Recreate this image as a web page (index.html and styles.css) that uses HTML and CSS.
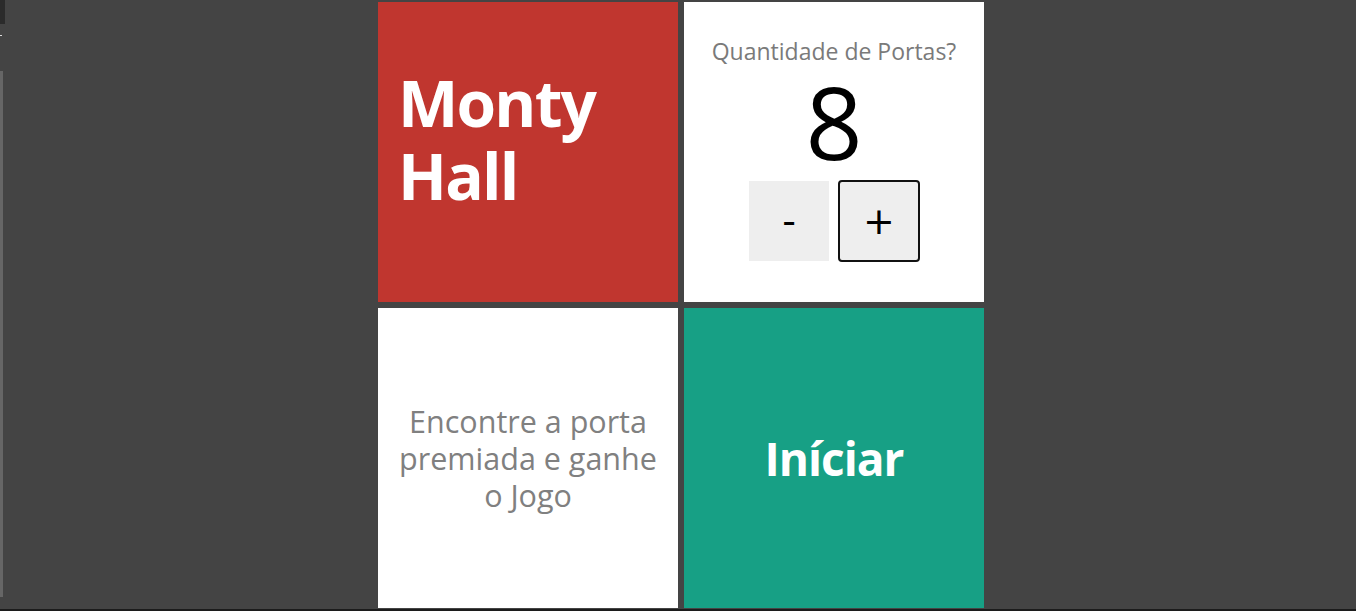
FILE: index.html
```html
<!DOCTYPE html>
<html lang="pt-BR">
<head>
<meta charset="utf-8">
<title>Monty Hall</title>
<link rel="stylesheet" href="styles.css">
</head>
<body>
<div class="edge-top"></div>
<div class="edge-tick"></div>
<div class="edge-strip"></div>
<main class="board">
  <section class="card card-title">
    <h1 class="title">Monty<br>Hall</h1>
  </section>
  <section class="card card-doors">
    <p class="doors-label">Quantidade de Portas?</p>
    <div class="doors-value">8</div>
    <div class="doors-buttons">
      <button class="btn">-</button>
      <button class="btn btn-focus">+</button>
    </div>
  </section>
  <section class="card card-info">
    <p class="info">Encontre a porta premiada e ganhe o Jogo</p>
  </section>
  <section class="card card-start">
    <span class="start">Iníciar</span>
  </section>
</main>
<div class="edge-bottom"></div>
</body>
</html>
```

FILE: styles.css
```css
html, body {
  margin: 0;
  padding: 0;
  height: 100%;
}
body {
  background: #444444;
  font-family: "Open Sans", "Noto Sans", sans-serif;
  overflow: hidden;
}
.board {
  display: grid;
  grid-template-columns: 300px 300px;
  grid-template-rows: 300px 300px;
  gap: 6px;
  justify-content: center;
  padding: 2px 0 0 6px;
}
.card {
  display: flex;
  flex-direction: column;
  box-sizing: border-box;
}
.card-title {
  background: #c0362f;
  justify-content: center;
  padding-left: 20px;
}
.title {
  margin: 0 0 27px 0;
  color: #ffffff;
  font-size: 64px;
  line-height: 73px;
  font-weight: 700;
  letter-spacing: -1.8px;
}
.card-doors {
  background: #ffffff;
  align-items: center;
  padding-top: 34px;
}
.doors-label {
  margin: 0;
  color: #7a7a7a;
  font-size: 23px;
  line-height: 30px;
}
.doors-value {
  margin-top: 0;
  color: #000000;
  font-size: 100px;
  line-height: 110px;
}
.doors-buttons {
  display: flex;
  gap: 10px;
  margin-top: 5px;
}
.btn {
  width: 80px;
  height: 80px;
  border: none;
  background: #eeeeee;
  color: #000000;
  font-family: "DejaVu Sans", sans-serif;
  font-size: 38px;
  padding: 0;
  border-radius: 0;
}
.btn-focus {
  outline: 2px solid #111111;
  outline-offset: -1px;
  border-radius: 3px;
}
.card-info {
  background: #ffffff;
  justify-content: center;
  align-items: center;
  padding: 0 18px;
}
.info {
  margin: 0;
  color: #808080;
  font-size: 30.5px;
  line-height: 37px;
  text-align: center;
}
.card-start {
  background: #17a085;
  justify-content: center;
  align-items: center;
}
.start {
  color: #ffffff;
  font-size: 46px;
  font-weight: 700;
  letter-spacing: -1px;
}
.edge-top {
  position: fixed;
  left: 0;
  top: 0;
  width: 5px;
  height: 24px;
  background: #2b2b2b;
}
.edge-tick {
  position: fixed;
  left: 0;
  top: 35px;
  width: 2px;
  height: 1px;
  background: #dddddd;
}
.edge-strip {
  position: fixed;
  left: 0;
  top: 71px;
  width: 3px;
  height: 526px;
  background: #666666;
}
.edge-bottom {
  position: fixed;
  left: 0;
  bottom: 0;
  width: 100%;
  height: 2px;
  background: #1c1c1c;
}
```
